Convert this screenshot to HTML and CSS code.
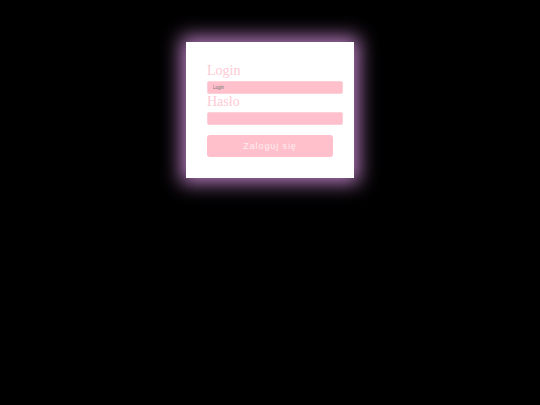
FILE: index.html
```html
<!DOCTYPE html>
<html>
<head>
<meta charset="utf-8">
<link rel="stylesheet" href="styles.css">
</head>
<body>
<div class="card">
  <form class="form">
    <label class="label" for="login">Login</label>
    <input class="field" id="login" type="text" placeholder="Login">
    <label class="label" for="haslo">Hasło</label>
    <input class="field" id="haslo" type="password">
    <button class="btn" type="button">Zaloguj się</button>
  </form>
</div>
</body>
</html>
```
FILE: styles.css
```css
html, body {
  margin: 0;
  padding: 0;
  background: #000;
  height: 100%;
}
body {
  display: flex;
  justify-content: center;
  align-items: flex-start;
}
.card {
  margin-top: 42px;
  width: 168px;
  height: 136px;
  box-sizing: border-box;
  background: #fff;
  padding: 21px 11px 21px 21px;
  box-shadow: 0 0 18px 5px rgba(205, 140, 215, 0.9);
}
.form {
  display: flex;
  flex-direction: column;
  align-items: flex-start;
}
.label {
  font-family: "Liberation Serif", serif;
  font-size: 14px;
  line-height: 15px;
  color: #ffcad4;
  margin-bottom: 3px;
}
.field {
  width: 136px;
  height: 13px;
  box-sizing: border-box;
  margin: 0;
  padding: 0 5px;
  background: #ffc0cb;
  border: 1px solid #fbd0d8;
  border-radius: 2px;
  font-family: "Liberation Sans", sans-serif;
  font-size: 4.5px;
  color: #555;
  outline: none;
}
.field::placeholder {
  color: #6e6e6e;
}
.btn {
  margin-top: 10px;
  width: 126px;
  height: 22px;
  border: none;
  border-radius: 3px;
  background: #ffc0cb;
  color: #ffeef1;
  font-family: "Liberation Sans", sans-serif;
  font-size: 9px;
  letter-spacing: 0.9px;
  padding: 0;
}
```
